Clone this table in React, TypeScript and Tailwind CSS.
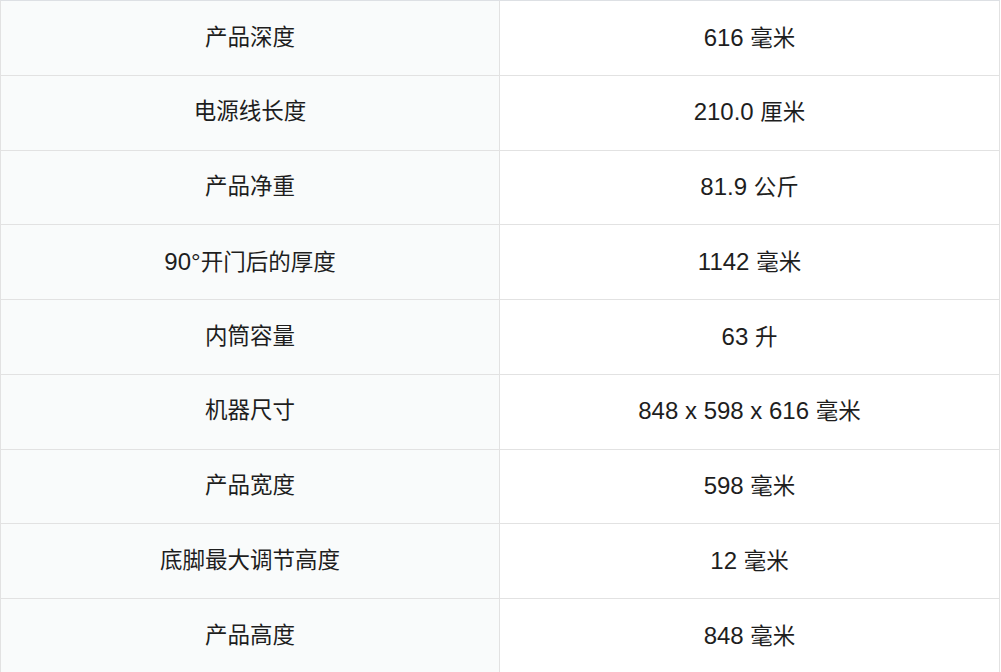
const rows: [string, string][] = [
  ['产品深度', '616 毫米'],
  ['电源线长度', '210.0 厘米'],
  ['产品净重', '81.9 公斤'],
  ['90°开门后的厚度', '1142 毫米'],
  ['内筒容量', '63 升'],
  ['机器尺寸', '848 x 598 x 616 毫米'],
  ['产品宽度', '598 毫米'],
  ['底脚最大调节高度', '12 毫米'],
  ['产品高度', '848 毫米'],
]

// latin runs are set a bit larger than the CJK runs, as in the original page
function Mixed({ text }: { text: string }) {
  const parts = text.match(/[\u4e00-\u9fff]+|[^\u4e00-\u9fff]+/g) ?? []
  return (
    <span>
      {parts.map((p, i) =>
        /[\u4e00-\u9fff]/.test(p) ? (
          <span key={i} className="text-[22.5px]">{p}</span>
        ) : (
          <span key={i} className="text-[24px]">{p}</span>
        )
      )}
    </span>
  )
}

export default function App() {
  return (
    <div
      className="w-[1000px] h-[672px] overflow-hidden bg-white text-[#1e1e1e] leading-none"
      style={{ fontFamily: '"Liberation Sans", "Noto Sans CJK SC", sans-serif' }}
    >
      <div className="border-t border-l border-t-[#dde0e4] border-l-[#e2e2e2]">
        {rows.map(([label, value]) => (
          <div key={label} className="flex h-[74.75px]">
            <div className="w-[499px] flex items-center justify-center bg-[#f9fbfb] border-r border-b border-[#e2e2e2]">
              <Mixed text={label} />
            </div>
            <div className="w-[500px] flex items-center justify-center bg-white border-r border-b border-[#e2e2e2]">
              <Mixed text={value} />
            </div>
          </div>
        ))}
      </div>
    </div>
  )
}
